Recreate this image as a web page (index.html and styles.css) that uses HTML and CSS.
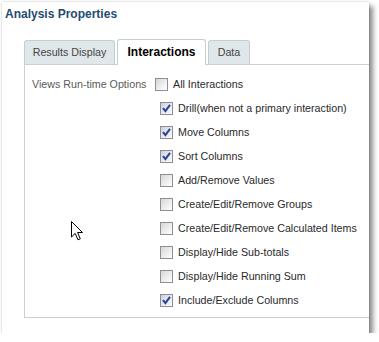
FILE: index.html
```html
<!DOCTYPE html>
<html>
<head>
<meta charset="utf-8">
<link rel="stylesheet" href="styles.css">
</head>
<body>
<div class="panel">
  <div class="title">Analysis Properties</div>
  <div class="tabs">
    <div class="tab t1">Results Display</div>
    <div class="tab t2 active">Interactions</div>
    <div class="tab t3">Data</div>
  </div>
  <div class="content">
    <div class="label">Views Run-time Options</div>
    <div class="opt first"><span class="cb"></span>All Interactions</div>
    <div class="opt"><span class="cb on"><svg viewBox="0 0 13 13"><path d="M3 6.2 L5.4 9.2 L10 2.8"/></svg></span>Drill(when not a primary interaction)</div>
    <div class="opt"><span class="cb on"><svg viewBox="0 0 13 13"><path d="M3 6.2 L5.4 9.2 L10 2.8"/></svg></span>Move Columns</div>
    <div class="opt"><span class="cb on"><svg viewBox="0 0 13 13"><path d="M3 6.2 L5.4 9.2 L10 2.8"/></svg></span>Sort Columns</div>
    <div class="opt"><span class="cb"></span>Add/Remove Values</div>
    <div class="opt"><span class="cb"></span>Create/Edit/Remove Groups</div>
    <div class="opt"><span class="cb"></span>Create/Edit/Remove Calculated Items</div>
    <div class="opt"><span class="cb"></span>Display/Hide Sub-totals</div>
    <div class="opt"><span class="cb"></span>Display/Hide Running Sum</div>
    <div class="opt"><span class="cb on"><svg viewBox="0 0 13 13"><path d="M3 6.2 L5.4 9.2 L10 2.8"/></svg></span>Include/Exclude Columns</div>
  </div>
  <svg class="cursor" viewBox="0 0 13 20"><path d="M0.5 0.5 L0.5 16 L4.2 12.4 L7 18.8 L9.3 17.8 L6.6 11.5 L11.5 11.5 Z"/></svg>
</div>
</body>
</html>
```

FILE: styles.css
```css
html, body {
  margin: 0;
  padding: 0;
  background: #ffffff;
}
body {
  font-family: "Liberation Sans", Arial, sans-serif;
  font-size: 10.7px;
}
.panel {
  position: relative;
  margin: 2px 0 0 2px;
  width: 367px;
  height: 331px;
  background: #ffffff;
  overflow: hidden;
  box-shadow: 4px 4px 5px rgba(0,0,0,0.45), 0 0 2px rgba(0,0,0,0.25);
}
.title {
  padding: 4px 0 0 3px;
  height: 16px;
  font-size: 12px;
  font-weight: bold;
  color: #1f4a73;
  line-height: 16px;
}
.tabs {
  display: flex;
  margin: 17px 0 0 22px;
  align-items: flex-end;
}
.tab {
  box-sizing: border-box;
  height: 24px;
  line-height: 23px;
  text-align: center;
  white-space: nowrap;
  background: #dfe7ea;
  border: 1px solid #c3ced3;
  border-bottom: none;
  border-radius: 3px 3px 0 0;
  color: #454545;
}
.t1 { width: 91px; }
.t2 { width: 89px; margin-left: 2px; }
.t3 { width: 42px; margin-left: 2px; }
.tab.active {
  height: 26px;
  line-height: 25px;
  background: #ffffff;
  color: #000000;
  font-weight: bold;
  font-size: 12px;
  position: relative;
  margin-bottom: -1px;
}
.content {
  box-sizing: border-box;
  display: grid;
  grid-template-columns: 123px auto;
  grid-auto-rows: 24px;
  align-content: start;
  align-items: center;
  margin-left: 22px;
  width: 360px;
  height: 254px;
  padding: 7px 0 0 7px;
  border: 1px solid #c9cfd2;
  border-right: none;
  color: #2a2a2a;
}
.label {
  color: #5a5a5a;
  grid-row: 1;
  grid-column: 1;
}
.opt {
  grid-column: 2;
  display: flex;
  align-items: center;
  margin-left: 5px;
  white-space: nowrap;
}
.opt.first {
  margin-left: 0;
}
.cb {
  box-sizing: border-box;
  width: 13px;
  height: 13px;
  border: 1px solid #8d8f90;
  background: linear-gradient(135deg, #d6d6d6 0%, #ececec 50%, #ffffff 100%);
  margin-right: 5px;
  display: inline-block;
  position: relative;
  flex: none;
}
.cb.on {
  background: linear-gradient(135deg, #c9d0dc 0%, #e6eaf1 50%, #f7f8fb 100%);
}
.cb svg {
  position: absolute;
  left: -1px;
  top: -1px;
  width: 13px;
  height: 13px;
}
.cb svg path {
  fill: none;
  stroke: #2e3f96;
  stroke-width: 2;
}
.cursor {
  position: absolute;
  left: 69px;
  top: 219px;
  width: 13px;
  height: 20px;
}
.cursor path {
  fill: #ffffff;
  stroke: #000000;
  stroke-width: 1;
  stroke-linejoin: miter;
}
```
